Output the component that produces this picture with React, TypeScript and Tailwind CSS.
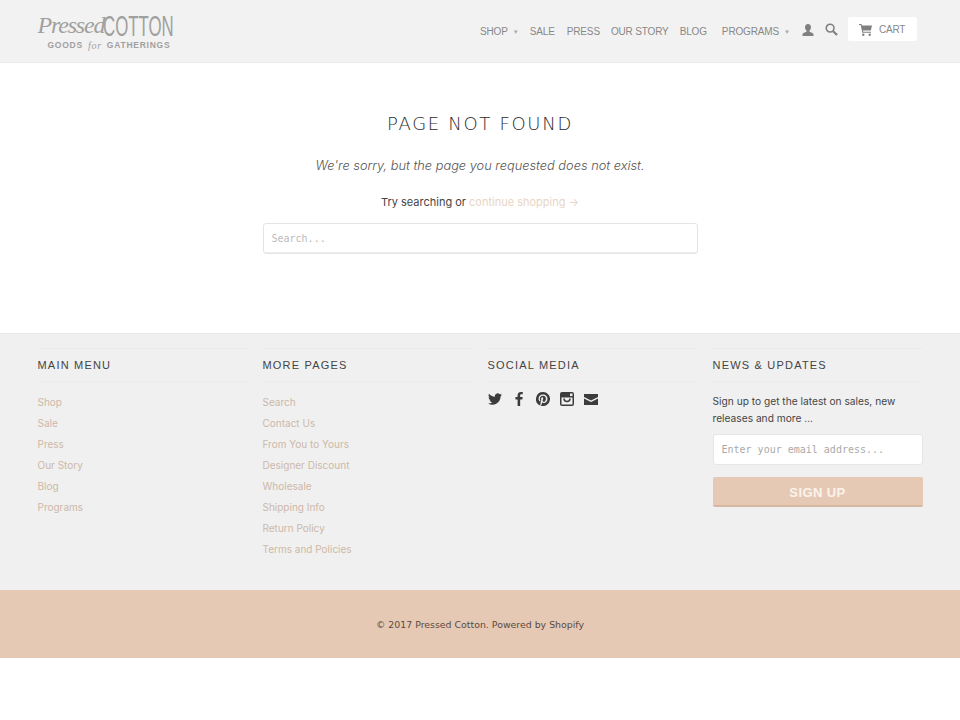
import React from "react";

const sans = "font-['Liberation_Sans',sans-serif]";
const body = "font-['Inter',sans-serif]";
const dejavu = "font-['DejaVu_Sans',sans-serif]";
const mono = "font-['DejaVu_Sans_Mono',monospace]";

function Col({ title, children }: { title: string; children: React.ReactNode }) {
  return (
    <div className="w-[210px]">
      <h4 className={`${sans} h-[34px] border-y border-[#ebebeb] text-[11px] leading-[32px] tracking-[1.2px] text-[#444]`}>{title}</h4>
      {children}
    </div>
  );
}

function Links({ items }: { items: string[] }) {
  return (
    <ul className="mt-[10px]">
      {items.map((t) => (
        <li key={t} className={`${body} h-[21px] text-[10px] leading-[21px] text-[#cdb8a9]`}>{t}</li>
      ))}
    </ul>
  );
}

function Logo() {
  return (
    <div className="w-[136px] text-[#a0a0a0] select-none">
      <div className="flex h-[27px] items-end">
        <span className="w-[65px] whitespace-nowrap font-['Liberation_Serif',serif] text-[24px] italic leading-[28px] tracking-[-1.2px]">Pressed</span>
        <span className="inline-block w-[71px] origin-left scale-x-[0.58] whitespace-nowrap font-['Liberation_Sans',sans-serif] text-[29px] leading-[25px]">COTTON</span>
      </div>
      <div className="mt-[1px] flex items-center gap-[5px] whitespace-nowrap pl-[10px] font-['Liberation_Sans',sans-serif] text-[8.5px] font-bold leading-[11px] tracking-[0.75px]">
        <span>GOODS</span>
        <span className="font-['Liberation_Serif',serif] text-[10px] font-normal italic">for</span>
        <span>GATHERINGS</span>
      </div>
    </div>
  );
}

const navCls = `${sans} text-[10px] leading-[14px] tracking-[-0.15px] text-[#888]`;

function Caret() {
  return <span className="ml-[5px] inline-block w-[4px] overflow-visible text-[6px] leading-[14px] text-[#aaa]">▼</span>;
}

export default function App() {
  return (
    <div className="min-h-[720px] bg-white">
      <header className="flex h-[63px] items-center justify-between border-b border-[#ececec] bg-[#f2f2f2] pl-[37.5px] pr-[43px]">
        <Logo />
        <nav className="flex items-center pt-[1px]">
          <span className={navCls}>SHOP</span>
          <Caret />
          <span className={`${navCls} ml-[13px]`}>SALE</span>
          <span className={`${navCls} ml-[12px]`}>PRESS</span>
          <span className={`${navCls} ml-[11px]`}>OUR STORY</span>
          <span className={`${navCls} ml-[11px]`}>BLOG</span>
          <span className={`${navCls} ml-[15px]`}>PROGRAMS</span>
          <Caret />
          <svg viewBox="0 0 12 12" className="ml-[14px] mb-[3px] h-[12px] w-[12px] fill-[#808080]">
            <path d="M6 0c1.9 0 3 1.4 3 3.2C9 4.800 8.200 6 7.500 6.700v1.100c1.700.6 3.500 1 4 2.200V12H.5v-2c.5-1.200 2.300-1.600 4-2.200V6.700C3.800 6 3 4.800 3 3.200 3 1.400 4.100 0 6 0z" />
          </svg>
          <svg viewBox="0 0 14 14" className="ml-[11px] mb-[5px] h-[13px] w-[13px] fill-none stroke-[#808080]">
            <circle cx="5.500" cy="5.500" r="4.200" strokeWidth="1.700" />
            <path d="M8.800 8.800l4.200 4.200" strokeWidth="2.400" />
          </svg>
          <div className="ml-[10px] mb-[5px] flex h-[24px] w-[69px] items-center rounded-[2px] bg-white pl-[11px]">
            <svg viewBox="0 0 13 12" className="mt-[1px] h-[12px] w-[13px] fill-[#808080]">
              <path d="M0 0h2.500l.4 1.500H13l-1.200 5H3.900l.3 1.200H12v1H3.300L1.700 1H0z" />
              <circle cx="4.300" cy="10.700" r="1.200" />
              <circle cx="10.700" cy="10.700" r="1.200" />
            </svg>
            <span className={`${sans} ml-[7px] pt-[2px] text-[10px] leading-[14px] tracking-[-0.2px] text-[#888]`}>CART</span>
          </div>
        </nav>
      </header>

      <main className="h-[270px] pt-[48px] text-center">
        <h1 className={`${dejavu} text-[18px] font-light leading-[26px] tracking-[1.7px] text-[#2a2a2a]`}>PAGE NOT FOUND</h1>
        <p className={`${body} mt-[17px] text-[12.800px] font-light italic leading-[24px] text-[#555]`}>We're sorry, but the page you requested does not exist.</p>
        <p className={`${body} mt-[12px] text-[11px] leading-[24px] text-[#444]`}>
          Try searching or <span className="text-[#e8d5c5]">continue shopping →</span>
        </p>
        <div className="mx-auto mt-[9px] h-[31px] w-[435px] rounded-[3px] border border-[#e4e4e4] bg-white pl-[8px] text-left shadow-[inset_0_-1px_0_#eeeeee]">
          <span className={`${mono} block text-[10px] leading-[29px] text-[#bbb]`}>Search...</span>
        </div>
      </main>

      <footer className="h-[257px] border-t border-[#e8e8e8] bg-[#f0f0f0] pl-[37.5px] pt-[14px]">
        <div className="flex gap-[15px]">
          <Col title="MAIN MENU">
            <Links items={["Shop", "Sale", "Press", "Our Story", "Blog", "Programs"]} />
          </Col>
          <Col title="MORE PAGES">
            <Links items={["Search", "Contact Us", "From You to Yours", "Designer Discount", "Wholesale", "Shipping Info", "Return Policy", "Terms and Policies"]} />
          </Col>
          <Col title="SOCIAL MEDIA">
            <div className="mt-[10px] flex items-center gap-[10px] text-[#3c3c3c]">
              <svg viewBox="0 0 24 24" className="h-[14px] w-[14px] fill-current">
                <path d="M23.950 4.570a10 10 0 0 1-2.820.770 4.960 4.960 0 0 0 2.160-2.720c-.950.550-2 .950-3.130 1.180a4.920 4.920 0 0 0-8.380 4.480C7.690 8.100 4.070 6.130 1.640 3.160a4.820 4.820 0 0 0-.670 2.480c0 1.710.870 3.210 2.190 4.100a4.900 4.900 0 0 1-2.230-.620v.060a4.920 4.920 0 0 0 3.950 4.830 5 5 0 0 1-2.210.080 4.940 4.940 0 0 0 4.600 3.420A9.870 9.870 0 0 1 0 19.540a14 14 0 0 0 7.560 2.210c9.050 0 14-7.500 14-13.980 0-.210 0-.420-.020-.630A9.940 9.940 0 0 0 24 4.590z" />
              </svg>
              <svg viewBox="0 0 14 24" className="h-[14px] w-[14px] fill-current">
                <path d="M9 24V13h3.700l.6-4.300H9V6c0-1.200.4-2.100 2.100-2.100h2.300V.2C13 .1 11.700 0 10.200 0 6.900 0 4.600 2 4.600 5.700v3H.9V13h3.700v11z" />
              </svg>
              <svg viewBox="0 0 24 24" className="h-[14px] w-[14px] fill-current">
                <path d="M12 0a12 12 0 0 0-4.370 23.180c-.100-.950-.200-2.400.040-3.440l1.400-5.960s-.360-.720-.360-1.780c0-1.670.970-2.910 2.170-2.910 1.020 0 1.520.770 1.520 1.680 0 1.030-.650 2.560-.990 3.980-.280 1.190.600 2.160 1.770 2.160 2.130 0 3.770-2.240 3.770-5.490 0-2.870-2.060-4.870-5-4.870-3.410 0-5.410 2.560-5.410 5.200 0 1.030.400 2.140.890 2.740.100.120.110.220.080.340l-.330 1.360c-.050.220-.180.270-.400.160-1.500-.700-2.430-2.890-2.430-4.650 0-3.780 2.750-7.260 7.920-7.260 4.160 0 7.390 2.970 7.390 6.920 0 4.130-2.610 7.460-6.220 7.460-1.210 0-2.360-.630-2.750-1.370l-.750 2.850c-.270 1.040-1 2.350-1.490 3.150A12 12 0 1 0 12 0z" />
              </svg>
              <svg viewBox="0 0 14 14" className="h-[14px] w-[14px]">
                <rect width="14" height="14" rx="2" fill="currentColor" />
                <rect x="1.500" y="5.500" width="11" height="7" fill="#f0f0f0" />
                <path d="M4 6.500a3 3 0 0 0 6 0" fill="none" stroke="currentColor" strokeWidth="1.500" />
                <rect x="10" y="1.500" width="2.500" height="2.500" fill="#f0f0f0" />
              </svg>
              <svg viewBox="0 0 14 11" className="h-[11px] w-[14px] fill-current">
                <path d="M0 0h14v3L7 6.500 0 3z" />
                <path d="M0 4.500L7 8l7-3.500V11H0z" />
              </svg>
            </div>
          </Col>
          <Col title="NEWS & UPDATES">
            <p className={`${body} mt-[11px] text-[10.200px] leading-[17px] text-[#444]`}>
              Sign up to get the latest on sales, new<br />releases and more ...
            </p>
            <div className="mt-[7px] h-[31px] rounded-[3px] border border-[#e6e6e6] bg-white pl-[8px]">
              <span className={`${mono} block text-[10px] leading-[29px] text-[#aaa]`}>Enter your email address...</span>
            </div>
            <button className={`${sans} mt-[12px] h-[30px] w-full rounded-[2px] border-b-2 border-[#d5b7a2] bg-[#e6c9b5] pt-[2px] text-[13px] font-bold leading-[28px] tracking-[0.4px] text-[#fbf3ec]`}>
              SIGN UP
            </button>
          </Col>
        </div>
      </footer>

      <div className={`${dejavu} flex h-[68px] items-center justify-center bg-[#e6c9b5] pt-[2px] text-[9.400px] text-[#5a4a40]`}>
        © 2017 Pressed Cotton. Powered by Shopify
      </div>
    </div>
  );
}
